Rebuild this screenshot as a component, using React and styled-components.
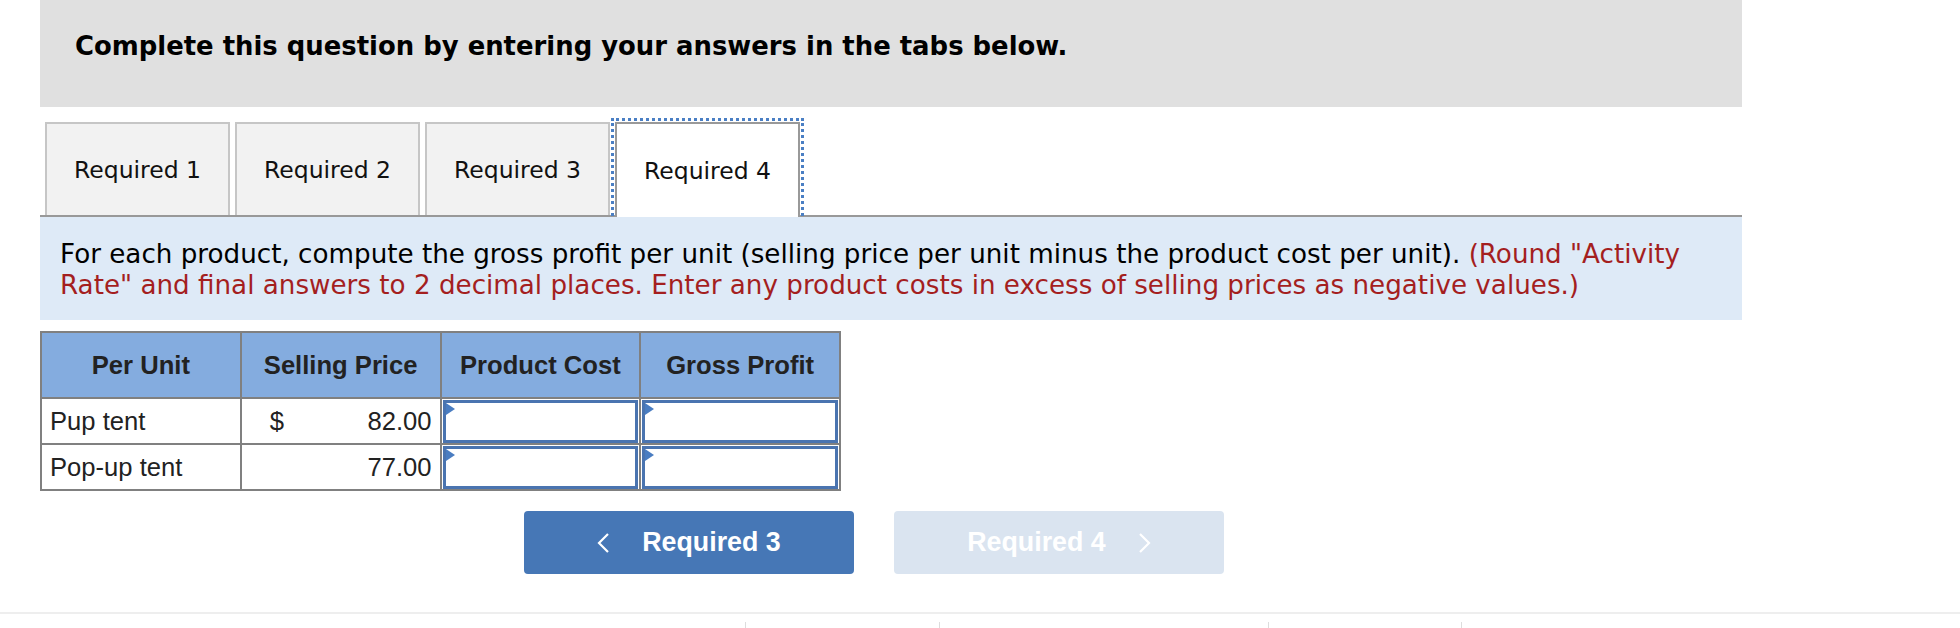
import React from "react";
import styled, { createGlobalStyle } from "styled-components";

const Global = createGlobalStyle`
  html, body { margin: 0; padding: 0; background: #ffffff; }
  body { font-family: "DejaVu Sans", Verdana, sans-serif; overflow: hidden; }
  * { box-sizing: border-box; }
`;

const Page = styled.div`
  width: 1960px;
  height: 628px;
  display: flex;
  flex-direction: column;
`;

const Main = styled.div`
  margin-left: 40px;
  width: 1702px;
  display: flex;
  flex-direction: column;
`;

const Banner = styled.div`
  height: 107px;
  background: #e0e0e0;
  padding: 29px 0 0 35px;
  font-family: "DejaVu Sans", Verdana, sans-serif;
  font-weight: bold;
  font-size: 25.9px;
  line-height: 34px;
  color: #000;
`;

const TabStrip = styled.div`
  margin-top: 15px;
  display: flex;
  gap: 5px;
  padding-left: 5px;
  border-bottom: 2px solid #999999;
`;

const Tab = styled.div`
  width: 185px;
  display: flex;
  align-items: center;
  justify-content: center;
  font-family: "DejaVu Sans", Verdana, sans-serif;
  font-size: 23.5px;
  color: #111;
  background: ${(p) => (p.$active ? "#ffffff" : "#f2f2f2")};
  border: 2px solid ${(p) => (p.$active ? "#999999" : "#c6c6c6")};
  border-bottom: none;
  outline: ${(p) => (p.$active ? "3px dotted #4a7fc4" : "none")};
  outline-offset: 1px;
  margin-bottom: ${(p) => (p.$active ? "-2px" : "0")};
  height: ${(p) => (p.$active ? "95px" : "93px")};
`;

const Instructions = styled.div`
  background: #deeaf7;
  padding: 22px 20px 19px 20px;
  font-family: "DejaVu Sans", Verdana, sans-serif;
  font-size: 26.2px;
  line-height: 31px;
  color: #000;
`;

const Red = styled.span`
  color: #a41f1f;
`;

const Table = styled.table`
  margin-top: 11px;
  border-collapse: collapse;
  width: 801px;
  table-layout: fixed;
  font-family: "Liberation Sans", Arial, sans-serif;
  font-size: 25.6px;
  color: #222;
  border: 2px solid #808080;
`;

const Th = styled.th`
  height: 66px;
  background: #84acdf;
  border: 2px solid #808080;
  font-weight: bold;
  text-align: center;
  padding: 0;
`;

const Td = styled.td`
  height: 46px;
  border: 2px solid #808080;
  padding: 0 8px;
  background: #fff;
`;

const PriceCell = styled(Td)`
  padding: 0 8px 0 28px;
`;

const PriceInner = styled.div`
  display: flex;
  justify-content: space-between;
`;

const InputCell = styled.td`
  height: 46px;
  border: 2px solid #808080;
  padding: 0;
  background: #fff;
`;

const InputBox = styled.div`
  position: relative;
  height: 43px;
  margin: 0 1px;
  border: 3px solid #4a74b0;
  background: #fff;
`;

const Marker = styled.span`
  position: absolute;
  left: 0;
  top: 0;
  width: 0;
  height: 0;
  border-top: 6px solid transparent;
  border-bottom: 6px solid transparent;
  border-left: 9px solid #4a7dc1;
`;

const ButtonRow = styled.div`
  margin-top: 20px;
  padding-left: 484px;
  display: flex;
  gap: 40px;
`;

const NavButton = styled.div`
  width: 330px;
  height: 63px;
  border-radius: 4px;
  background: ${(p) => (p.$disabled ? "#dae4f0" : "#4677b6")};
  color: #ffffff;
  display: flex;
  align-items: center;
  justify-content: center;
  gap: 33px;
  font-family: "Liberation Sans", Arial, sans-serif;
  font-weight: bold;
  font-size: 26.8px;
`;

const Footer = styled.div`
  margin-top: 38px;
  border-top: 2px solid #eeeeee;
  display: flex;
  height: 16px;
  padding-top: 8px;
`;

const FootCell = styled.div`
  width: ${(p) => p.$w}px;
  height: 6px;
  border-left: ${(p) => (p.$tick ? "1px solid #dddddd" : "none")};
`;

const Chevron = ({ dir }) => (
  <svg width="12" height="20" viewBox="0 0 12 20">
    <polyline
      points={dir === "left" ? "11,1 2,10 11,19" : "1,1 10,10 1,19"}
      fill="none"
      stroke="#ffffff"
      strokeWidth="2.2"
    />
  </svg>
);

const rows = [
  { name: "Pup tent", dollar: true, price: "82.00" },
  { name: "Pop-up tent", dollar: false, price: "77.00" },
];

export default function App() {
  return (
    <Page>
      <Global />
      <Main>
        <Banner>Complete this question by entering your answers in the tabs below.</Banner>
        <TabStrip>
          <Tab>Required 1</Tab>
          <Tab>Required 2</Tab>
          <Tab>Required 3</Tab>
          <Tab $active>Required 4</Tab>
        </TabStrip>
        <Instructions>
          For each product, compute the gross profit per unit (selling price per unit minus the product cost per unit).{" "}
          <Red>
            (Round "Activity Rate" and final answers to 2 decimal places. Enter any product costs in excess of selling prices as negative values.)
          </Red>
        </Instructions>
        <Table>
          <thead>
            <tr>
              <Th>Per Unit</Th>
              <Th>Selling Price</Th>
              <Th>Product Cost</Th>
              <Th>Gross Profit</Th>
            </tr>
          </thead>
          <tbody>
            {rows.map((r) => (
              <tr key={r.name}>
                <Td>{r.name}</Td>
                <PriceCell>
                  <PriceInner>
                    <span>{r.dollar ? "$" : ""}</span>
                    <span>{r.price}</span>
                  </PriceInner>
                </PriceCell>
                <InputCell>
                  <InputBox>
                    <Marker />
                  </InputBox>
                </InputCell>
                <InputCell>
                  <InputBox>
                    <Marker />
                  </InputBox>
                </InputCell>
              </tr>
            ))}
          </tbody>
        </Table>
        <ButtonRow>
          <NavButton>
            <Chevron dir="left" />
            <span>Required 3</span>
          </NavButton>
          <NavButton $disabled>
            <span>Required 4</span>
            <Chevron dir="right" />
          </NavButton>
        </ButtonRow>
      </Main>
      <Footer>
        <FootCell $w={745} />
        <FootCell $w={194} $tick />
        <FootCell $w={329} $tick />
        <FootCell $w={193} $tick />
        <FootCell $w={499} $tick />
      </Footer>
    </Page>
  );
}
